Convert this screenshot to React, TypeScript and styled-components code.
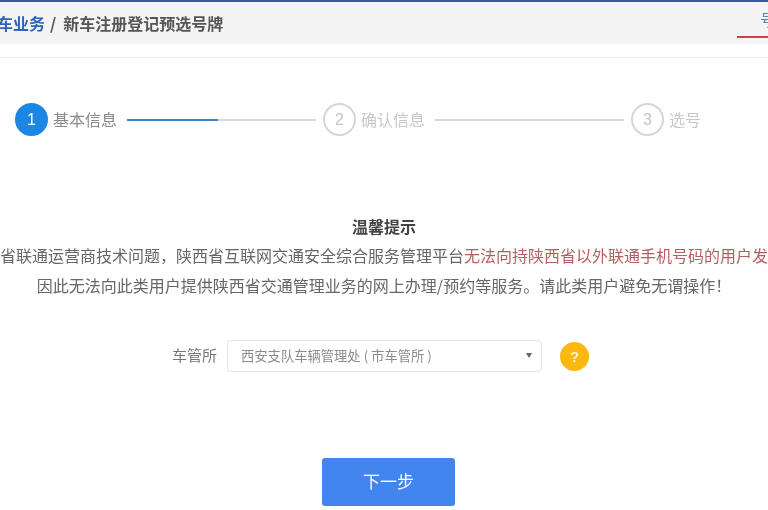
import { createGlobalStyle, styled } from "styled-components";

const GlobalStyle = createGlobalStyle`
  html, body {
    margin: 0;
    padding: 0;
    background: #fff;
    overflow: hidden;
  }
  body {
    font-family: "Noto Sans CJK SC", "Liberation Sans", sans-serif;
  }
`;

const Page = styled.div`
  width: 768px;
  height: 510px;
  overflow: hidden;
  border-top: 2px solid #3f55a3;
  box-sizing: border-box;
  filter: blur(0.6px);
`;

const HeaderBand = styled.div`
  height: 55px;
  border-bottom: 1px solid #ececec;
`;

const Header = styled.header`
  height: 42px;
  background: #f4f4f4;
  display: flex;
  align-items: center;
  justify-content: space-between;
`;

const Breadcrumb = styled.div`
  display: flex;
  margin-left: -35px;
  font-size: 16px;
  font-weight: 700;
  color: #555;
  white-space: nowrap;
`;

const CrumbLink = styled.span`
  color: #2f62b8;
`;

const CrumbSeparator = styled.span`
  margin: 0 7px 0 5px;
`;

const Tab = styled.div`
  flex: none;
  align-self: flex-start;
  width: 110px;
  margin-right: -79px;
  height: 36px;
  box-sizing: border-box;
  padding: 6px 0 0 23px;
  font-size: 16px;
  line-height: 22px;
  color: #5b86a8;
  white-space: nowrap;
  border-bottom: 2px solid #d33c44;
`;

const Stepper = styled.ol`
  display: flex;
  align-items: center;
  list-style: none;
  margin: 45px 0 0;
  padding: 0 0 0 15px;
`;

const Circle = styled.span<{ $active?: boolean }>`
  flex: none;
  width: 33px;
  height: 33px;
  box-sizing: border-box;
  border-radius: 50%;
  display: flex;
  align-items: center;
  justify-content: center;
  font-size: 16px;
  font-family: "Liberation Sans", sans-serif;
  color: ${(p) => (p.$active ? "#fff" : "#c4c4c4")};
  background: ${(p) => (p.$active ? "#1c86e4" : "#fff")};
  border: 2px solid ${(p) => (p.$active ? "#1c86e4" : "#d6d6d6")};
`;

const StepLabel = styled.span<{ $active?: boolean }>`
  margin: 0 10px 2px 5px;
  width: 64px;
  font-size: 16px;
  white-space: nowrap;
  color: ${(p) => (p.$active ? "#8a8a8a" : "#c8c8c8")};
`;

const StepLine = styled.span`
  flex: none;
  width: 189px;
  height: 2px;
  margin-right: 7px;
  background: #d8d8d8;
`;

const StepLineFill = styled.span<{ $percent: number }>`
  display: block;
  height: 100%;
  width: ${(p) => p.$percent}%;
  background: #3f86c4;
`;

const Notice = styled.section`
  margin-top: 76px;
  text-align: center;
  font-size: 16px;
  line-height: 30px;
  color: #666;
`;

const NoticeTitle = styled.h2`
  margin: 0;
  font-size: 16px;
  line-height: 28px;
  font-weight: 700;
  color: #444;
`;

const NoticeLine = styled.p`
  display: flex;
  justify-content: center;
  margin: 0;
  white-space: nowrap;
`;

const Warning = styled.span`
  color: #b5605f;
`;

const FormRow = styled.div`
  display: flex;
  align-items: center;
  margin-top: 40px;
  padding-left: 172px;
`;

const FieldLabel = styled.label`
  width: 55px;
  padding-bottom: 3px;
  font-size: 15px;
  color: #777;
  white-space: nowrap;
`;

const Select = styled.div`
  width: 315px;
  height: 32px;
  box-sizing: border-box;
  display: flex;
  align-items: center;
  justify-content: space-between;
  padding: 0 9px 1px 13px;
  background: #fff;
  border: 1px solid #e4e4e4;
  border-radius: 3px;
  font-size: 13.3px;
  color: #8c8c8c;
  white-space: nowrap;
`;

const Caret = styled.span`
  width: 0;
  height: 0;
  border-left: 3px solid transparent;
  border-right: 3px solid transparent;
  border-top: 5px solid #666;
`;

const HelpBadge = styled.span`
  flex: none;
  width: 29px;
  height: 29px;
  margin-left: 18px;
  border-radius: 50%;
  display: flex;
  align-items: center;
  justify-content: center;
  background: #fbb80f;
  color: #fff3c9;
  font-size: 15px;
  font-weight: 700;
  font-family: "Liberation Sans", sans-serif;
`;

const NextButton = styled.button`
  display: block;
  width: 133px;
  height: 48px;
  margin: 86px 0 0 322px;
  padding: 0 0 3px;
  border: 0;
  border-radius: 3px;
  background: #4285ee;
  color: #fff;
  font-family: inherit;
  font-size: 17px;
`;

const steps = [
  { id: 1, label: "基本信息", progress: 48 },
  { id: 2, label: "确认信息", progress: 0 },
  { id: 3, label: "选号" },
];

export default function App() {
  return (
    <>
      <GlobalStyle />
      <Page>
        <HeaderBand>
          <Header>
            <Breadcrumb>
              <CrumbLink>机动车业务</CrumbLink>
              <CrumbSeparator>/</CrumbSeparator>
              新车注册登记预选号牌
            </Breadcrumb>
            <Tab>号牌查询</Tab>
          </Header>
        </HeaderBand>

        <Stepper>
          {steps.map((step) => (
            <li key={step.id} style={{ display: "contents" }}>
              <Circle $active={step.id === 1}>{step.id}</Circle>
              <StepLabel $active={step.id === 1}>{step.label}</StepLabel>
              {step.progress !== undefined && (
                <StepLine>
                  <StepLineFill $percent={step.progress} />
                </StepLine>
              )}
            </li>
          ))}
        </Stepper>

        <Notice>
          <NoticeTitle>温馨提示</NoticeTitle>
          <NoticeLine>
            <span>
              由于陕西省联通运营商技术问题，陕西省互联网交通安全综合服务管理平台
              <Warning>无法向持陕西省以外联通手机号码的用户发送短信，</Warning>
            </span>
          </NoticeLine>
          <NoticeLine>
            因此无法向此类用户提供陕西省交通管理业务的网上办理/预约等服务。请此类用户避免无谓操作！
          </NoticeLine>
        </Notice>

        <FormRow>
          <FieldLabel>车管所</FieldLabel>
          <Select>
            西安支队车辆管理处 ( 市车管所 )
            <Caret />
          </Select>
          <HelpBadge>?</HelpBadge>
        </FormRow>

        <NextButton type="button">下一步</NextButton>
      </Page>
    </>
  );
}
